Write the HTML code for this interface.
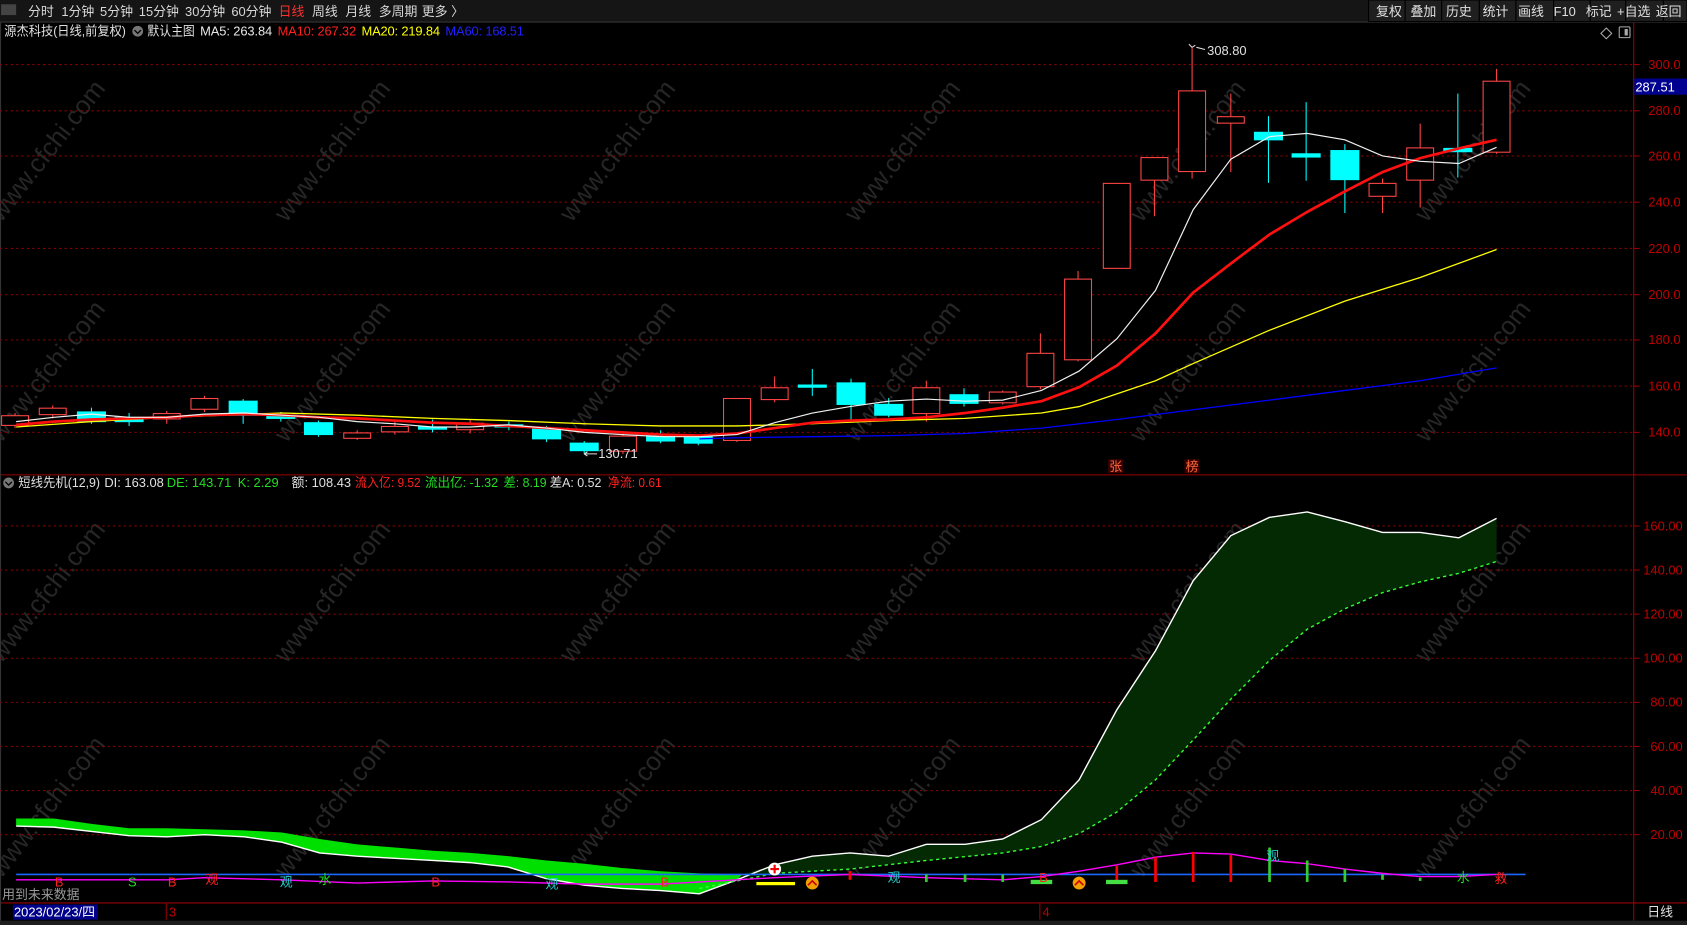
<!DOCTYPE html>
<html><head><meta charset="utf-8"><style>
html,body{margin:0;padding:0;background:#000;width:1687px;height:925px;overflow:hidden}
svg{display:block}
text{font-family:"Liberation Sans","Noto Sans CJK SC",sans-serif;font-size:12px}
</style></head><body>
<svg width="1687" height="925" viewBox="0 0 1568 860" preserveAspectRatio="none">
<rect width="1568" height="860" fill="#000"/>
<!-- watermarks -->
<g fill="#262626" font-family="Liberation Sans,sans-serif">
<text transform="translate(50,145) rotate(-52)" text-anchor="middle" style="font-size:24px">www.cfchi.com</text>
<text transform="translate(315,145) rotate(-52)" text-anchor="middle" style="font-size:24px">www.cfchi.com</text>
<text transform="translate(580,145) rotate(-52)" text-anchor="middle" style="font-size:24px">www.cfchi.com</text>
<text transform="translate(845,145) rotate(-52)" text-anchor="middle" style="font-size:24px">www.cfchi.com</text>
<text transform="translate(1110,145) rotate(-52)" text-anchor="middle" style="font-size:24px">www.cfchi.com</text>
<text transform="translate(1375,145) rotate(-52)" text-anchor="middle" style="font-size:24px">www.cfchi.com</text>
<text transform="translate(50,350) rotate(-52)" text-anchor="middle" style="font-size:24px">www.cfchi.com</text>
<text transform="translate(315,350) rotate(-52)" text-anchor="middle" style="font-size:24px">www.cfchi.com</text>
<text transform="translate(580,350) rotate(-52)" text-anchor="middle" style="font-size:24px">www.cfchi.com</text>
<text transform="translate(845,350) rotate(-52)" text-anchor="middle" style="font-size:24px">www.cfchi.com</text>
<text transform="translate(1110,350) rotate(-52)" text-anchor="middle" style="font-size:24px">www.cfchi.com</text>
<text transform="translate(1375,350) rotate(-52)" text-anchor="middle" style="font-size:24px">www.cfchi.com</text>
<text transform="translate(50,555) rotate(-52)" text-anchor="middle" style="font-size:24px">www.cfchi.com</text>
<text transform="translate(315,555) rotate(-52)" text-anchor="middle" style="font-size:24px">www.cfchi.com</text>
<text transform="translate(580,555) rotate(-52)" text-anchor="middle" style="font-size:24px">www.cfchi.com</text>
<text transform="translate(845,555) rotate(-52)" text-anchor="middle" style="font-size:24px">www.cfchi.com</text>
<text transform="translate(1110,555) rotate(-52)" text-anchor="middle" style="font-size:24px">www.cfchi.com</text>
<text transform="translate(1375,555) rotate(-52)" text-anchor="middle" style="font-size:24px">www.cfchi.com</text>
<text transform="translate(50,755) rotate(-52)" text-anchor="middle" style="font-size:24px">www.cfchi.com</text>
<text transform="translate(315,755) rotate(-52)" text-anchor="middle" style="font-size:24px">www.cfchi.com</text>
<text transform="translate(580,755) rotate(-52)" text-anchor="middle" style="font-size:24px">www.cfchi.com</text>
<text transform="translate(845,755) rotate(-52)" text-anchor="middle" style="font-size:24px">www.cfchi.com</text>
<text transform="translate(1110,755) rotate(-52)" text-anchor="middle" style="font-size:24px">www.cfchi.com</text>
<text transform="translate(1375,755) rotate(-52)" text-anchor="middle" style="font-size:24px">www.cfchi.com</text>
</g>

<!-- toolbar -->
<rect x="0" y="0" width="1568" height="20" fill="#151515"/>
<line x1="0" y1="20.5" x2="1568" y2="20.5" stroke="#333"/>
<rect x="1" y="4" width="14" height="10" fill="#444"/>
<g fill="#d8d8d8">
<text x="26" y="15">分时</text><text x="57" y="15">1分钟</text><text x="93" y="15">5分钟</text>
<text x="129" y="15">15分钟</text><text x="172" y="15">30分钟</text><text x="215" y="15">60分钟</text>
<text x="259" y="15" fill="#ff3030">日线</text><text x="290" y="15">周线</text><text x="321" y="15">月线</text>
<text x="352" y="15">多周期</text><text x="392" y="15">更多 〉</text>
</g>
<g fill="#1f1f1f" stroke="#000">
<rect x="1272" y="0" width="34" height="20"/><rect x="1306" y="0" width="34" height="20"/>
<rect x="1340" y="0" width="35" height="20"/><rect x="1375" y="0" width="34" height="20"/>
<rect x="1409" y="0" width="35" height="20"/><rect x="1444" y="0" width="34" height="20"/>
<rect x="1478" y="0" width="33" height="20"/><rect x="1511" y="0" width="35" height="20"/>
<rect x="1546" y="0" width="22" height="20"/>
</g>
<g fill="#e0e0e0">
<text x="1279" y="15">复权</text><text x="1311" y="15">叠加</text><text x="1344" y="15">历史</text>
<text x="1378" y="15">统计</text><text x="1411" y="15">画线</text><text x="1444" y="15">F10</text>
<text x="1474" y="15">标记</text><text x="1503" y="15">+自选</text><text x="1539" y="15">返回</text>
</g>
<!-- info line -->
<g>
<text x="4" y="33" fill="#e0e0e0" textLength="113" lengthAdjust="spacingAndGlyphs">源杰科技(日线,前复权)</text>
<circle cx="128" cy="29" r="5" fill="#777"/><path d="M125 28 l3 3 l3 -3" stroke="#000" fill="none" stroke-width="1.2"/>
<text x="137" y="33" fill="#e0e0e0" textLength="44" lengthAdjust="spacingAndGlyphs">默认主图</text>
<text x="186" y="33" fill="#e8e8e8" textLength="67">MA5: 263.84</text>
<text x="258" y="33" fill="#ff2020" textLength="73">MA10: 267.32</text>
<text x="336" y="33" fill="#ffff00" textLength="73">MA20: 219.84</text>
<text x="414" y="33" fill="#2020ff" textLength="73">MA60: 168.51</text>
</g>
<path d="M1493 26 l5 5 l-5 5 l-5 -5 z" fill="none" stroke="#aaa"/>
<rect x="1505" y="25" width="10" height="10" rx="1" fill="none" stroke="#aaa"/><rect x="1510" y="27" width="3" height="6" fill="#aaa"/>

<!-- axes -->
<line x1="1518.5" y1="21" x2="1518.5" y2="856" stroke="#9a0000"/>
<line x1="0" y1="441.5" x2="1568" y2="441.5" stroke="#9a0000"/>
<line x1="0" y1="839.5" x2="1568" y2="839.5" stroke="#9a0000"/>
<line x1="0.5" y1="21" x2="0.5" y2="856" stroke="#333"/>
<g stroke="#8a0000" stroke-dasharray="2,3">
<line x1="0" y1="60" x2="1518" y2="60"/><line x1="0" y1="103" x2="1518" y2="103"/>
<line x1="0" y1="145" x2="1518" y2="145"/><line x1="0" y1="188" x2="1518" y2="188"/>
<line x1="0" y1="231" x2="1518" y2="231"/><line x1="0" y1="274" x2="1518" y2="274"/>
<line x1="0" y1="316" x2="1518" y2="316"/><line x1="0" y1="359" x2="1518" y2="359"/>
<line x1="0" y1="402" x2="1518" y2="402"/>
<line x1="0" y1="489" x2="1518" y2="489"/><line x1="0" y1="530" x2="1518" y2="530"/>
<line x1="0" y1="571" x2="1518" y2="571"/><line x1="0" y1="612" x2="1518" y2="612"/>
<line x1="0" y1="653" x2="1518" y2="653"/><line x1="0" y1="694" x2="1518" y2="694"/>
<line x1="0" y1="735" x2="1518" y2="735"/><line x1="0" y1="776" x2="1518" y2="776"/>
</g>
<g stroke="#9a0000">
<line x1="1518" y1="60" x2="1524" y2="60"/><line x1="1518" y1="103" x2="1524" y2="103"/><line x1="1518" y1="145" x2="1524" y2="145"/><line x1="1518" y1="188" x2="1524" y2="188"/><line x1="1518" y1="231" x2="1524" y2="231"/><line x1="1518" y1="274" x2="1524" y2="274"/><line x1="1518" y1="316" x2="1524" y2="316"/><line x1="1518" y1="359" x2="1524" y2="359"/><line x1="1518" y1="402" x2="1524" y2="402"/>
<line x1="1518" y1="489" x2="1524" y2="489"/><line x1="1518" y1="530" x2="1524" y2="530"/><line x1="1518" y1="571" x2="1524" y2="571"/><line x1="1518" y1="612" x2="1524" y2="612"/><line x1="1518" y1="653" x2="1524" y2="653"/><line x1="1518" y1="694" x2="1524" y2="694"/><line x1="1518" y1="735" x2="1524" y2="735"/><line x1="1518" y1="776" x2="1524" y2="776"/>
</g>
<g fill="#c00000" text-anchor="end">
<text x="1562" y="64">300.0</text><text x="1562" y="107">280.0</text><text x="1562" y="149">260.0</text>
<text x="1562" y="192">240.0</text><text x="1562" y="235">220.0</text><text x="1562" y="278">200.0</text>
<text x="1562" y="320">180.0</text><text x="1562" y="363">160.0</text><text x="1562" y="406">140.0</text>
<text x="1564" y="493">160.00</text><text x="1564" y="534">140.00</text><text x="1564" y="575">120.00</text>
<text x="1564" y="616">100.00</text><text x="1564" y="657">80.00</text><text x="1564" y="698">60.00</text>
<text x="1564" y="739">40.00</text><text x="1564" y="780">20.00</text>
</g>
<rect x="1519" y="73" width="49" height="15" fill="#000090"/>
<text x="1520" y="85" fill="#fff">287.51</text>

<!-- candles -->
<g stroke="#ff4545" fill="#000" stroke-width="1">
<line x1="14" y1="384" x2="14" y2="398"/><rect x="1.5" y="386.5" width="25" height="9"/>
<line x1="49" y1="377" x2="49" y2="389"/><rect x="36.5" y="379.5" width="25" height="6"/>
<line x1="155" y1="382" x2="155" y2="394"/><rect x="142.5" y="384.5" width="25" height="5"/>
<line x1="190" y1="368" x2="190" y2="383"/><rect x="177.5" y="370.5" width="25" height="10"/>
<line x1="332" y1="400" x2="332" y2="409"/><rect x="319.5" y="402.5" width="25" height="5"/>
<line x1="367" y1="392" x2="367" y2="404"/><rect x="354.5" y="396.5" width="25" height="5"/>
<line x1="437" y1="390" x2="437" y2="403"/><rect x="424.5" y="393.5" width="25" height="6"/>
<line x1="579" y1="403" x2="579" y2="422"/><rect x="566.5" y="405.5" width="25" height="14"/>
<line x1="685" y1="370" x2="685" y2="411"/><rect x="672.5" y="370.5" width="25" height="39"/>
<line x1="720" y1="350" x2="720" y2="374"/><rect x="707.5" y="360.5" width="25" height="11"/>
<line x1="861" y1="354" x2="861" y2="392"/><rect x="848.5" y="360.5" width="25" height="24"/>
<line x1="932" y1="363" x2="932" y2="376"/><rect x="919.5" y="364.5" width="25" height="10"/>
<line x1="967" y1="310" x2="967" y2="362"/><rect x="954.5" y="328.5" width="25" height="31"/>
<line x1="1002" y1="252" x2="1002" y2="336"/><rect x="989.5" y="259.5" width="25" height="75"/>
<rect x="1025.5" y="170.5" width="25" height="79"/>
<line x1="1073" y1="146" x2="1073" y2="201"/><rect x="1060.5" y="146.5" width="25" height="21"/>
<line x1="1108" y1="44" x2="1108" y2="166"/><rect x="1095.5" y="84.5" width="25" height="75"/>
<line x1="1144" y1="87" x2="1144" y2="160"/><rect x="1131.5" y="108.5" width="25" height="6"/>
<line x1="1285" y1="166" x2="1285" y2="198"/><rect x="1272.5" y="170.5" width="25" height="12"/>
<line x1="1320" y1="115" x2="1320" y2="193"/><rect x="1307.5" y="137.5" width="25" height="30"/>
<line x1="1391" y1="64" x2="1391" y2="143"/><rect x="1378.5" y="75.5" width="25" height="66"/>
</g>
<g stroke="#00ffff" fill="#00ffff">
<line x1="85" y1="379" x2="85" y2="394"/><rect x="72" y="383" width="26" height="9"/>
<line x1="120" y1="384" x2="120" y2="396"/><rect x="107" y="388" width="26" height="4"/>
<line x1="226" y1="371" x2="226" y2="394"/><rect x="213" y="373" width="26" height="13"/>
<line x1="261" y1="383" x2="261" y2="392"/><rect x="248" y="386" width="26" height="3"/>
<line x1="296" y1="391" x2="296" y2="406"/><rect x="283" y="393" width="26" height="11"/>
<line x1="402" y1="390" x2="402" y2="402"/><rect x="389" y="397" width="26" height="2"/>
<line x1="473" y1="392" x2="473" y2="400"/><rect x="460" y="395" width="26" height="2"/>
<line x1="508" y1="396" x2="508" y2="411"/><rect x="495" y="398" width="26" height="10"/>
<line x1="543" y1="410" x2="543" y2="422"/><rect x="530" y="412" width="26" height="7"/>
<line x1="614" y1="400" x2="614" y2="412"/><rect x="601" y="405" width="26" height="5"/>
<line x1="649" y1="404" x2="649" y2="414"/><rect x="636" y="406" width="26" height="6"/>
<line x1="755" y1="343" x2="755" y2="368"/><rect x="742" y="358" width="26" height="2"/>
<line x1="791" y1="352" x2="791" y2="392"/><rect x="778" y="356" width="26" height="20"/>
<line x1="826" y1="370" x2="826" y2="388"/><rect x="813" y="376" width="26" height="10"/>
<line x1="896" y1="361" x2="896" y2="378"/><rect x="883" y="367" width="26" height="8"/>
<line x1="1179" y1="108" x2="1179" y2="170"/><rect x="1166" y="123" width="26" height="7"/>
<line x1="1214" y1="95" x2="1214" y2="168"/><rect x="1201" y="143" width="26" height="3"/>
<line x1="1250" y1="134" x2="1250" y2="198"/><rect x="1237" y="140" width="26" height="27"/>
<line x1="1355" y1="87" x2="1355" y2="165"/><rect x="1342" y="138" width="26" height="3"/>
</g>
<!-- MAs -->
<polyline fill="none" stroke="#0000ff" stroke-width="1.2" points="650,408 685,407 755,406 826,405 897,403 968,398 1038,390 1109,381 1180,372 1250,363 1320,354 1391,342"/>
<polyline fill="none" stroke="#ffff00" stroke-width="1.2" points="15,397 85,392 155,388 262,384 332,386 402,389 472,391 543,394 614,396 685,396 755,394 826,391 897,389 968,384 1003,378 1074,354 1109,338 1180,307 1250,280 1320,258 1391,232"/>
<polyline fill="none" stroke="#ff1010" stroke-width="2.5" points="15,395 50,392 85,390 120,389 155,388 190,386 227,385 262,386 297,388 332,389 367,391 402,393 437,394 472,396 508,398 543,400 578,402 614,404 650,405 685,403 720,398 755,393 790,391 826,390 861,388 897,384 932,379 968,373 1003,360 1038,340 1074,310 1109,272 1144,245 1180,218 1215,197 1250,178 1285,160 1320,147 1356,138 1391,130"/>
<polyline fill="none" stroke="#f0f0f0" stroke-width="1.1" points="15,392 50,388 85,385 120,388 155,388 190,385 227,384 262,386 297,388 332,392 367,394 402,397 437,397 472,395 508,398 543,402 578,404 614,406 650,406 685,404 720,393 755,384 790,378 826,373 861,371 897,373 932,372 968,363 1003,345 1038,315 1074,270 1109,195 1144,148 1180,127 1215,124 1250,130 1285,145 1320,150 1356,152 1391,137"/>
<path d="M1108 44 l-3 -3 m3 3 l3 -2 M1112 44 l8 2" stroke="#ddd" fill="none"/>
<text x="1122" y="51" fill="#e0e0e0">308.80</text>
<path d="M543 422 h12 M543 422 l3 -2 M543 422 l3 2" stroke="#ddd" fill="none"/>
<text x="556" y="426" fill="#e0e0e0">130.71</text>
<rect x="1030" y="427" width="14" height="13" fill="#3a0000"/><text x="1031" y="438" fill="#ff6a3a">张</text>
<rect x="1101" y="427" width="14" height="13" fill="#3a0000"/><text x="1102" y="438" fill="#ff6a3a">榜</text>

<!-- indicator header -->
<circle cx="8" cy="449" r="5" fill="#777"/><path d="M5 448 l3 3 l3 -3" stroke="#000" fill="none" stroke-width="1.2"/>
<text x="17" y="453" fill="#e0e0e0" textLength="76" lengthAdjust="spacingAndGlyphs">短线先机(12,9)</text>
<text x="97" y="453" fill="#e0e0e0">DI: 163.08</text>
<text x="155" y="453" fill="#22dd22">DE: 143.71</text>
<text x="221" y="453" fill="#22dd22">K: 2.29</text>
<text x="271" y="453" fill="#e0e0e0">额: 108.43</text>
<text x="330" y="453" fill="#ff2020" textLength="61" lengthAdjust="spacingAndGlyphs">流入亿: 9.52</text>
<text x="395" y="453" fill="#22dd22" textLength="68" lengthAdjust="spacingAndGlyphs">流出亿: -1.32</text>
<text x="468" y="453" fill="#22dd22" textLength="40" lengthAdjust="spacingAndGlyphs">差: 8.19</text>
<text x="511" y="453" fill="#e0e0e0" textLength="48" lengthAdjust="spacingAndGlyphs">差A: 0.52</text>
<text x="565" y="453" fill="#ff2020" textLength="50" lengthAdjust="spacingAndGlyphs">净流: 0.61</text>

<!-- indicator bands -->
<polygon fill="#00e000" points="15,761 50,761 85,766 120,770 155,770 190,771 227,772 262,774 297,780 332,785 367,788 402,791 437,793 472,796 508,800 543,803 578,807 614,810 650,812 690,813 685,818 650,831 614,828 578,826 543,823 508,817 472,806 437,802 402,800 367,798 332,796 297,793 262,783 227,778 190,776 155,778 120,777 85,773 50,769 15,768"/>
<polygon fill="#042a04" points="690,813 720,804 755,796 790,793 826,796 861,785 897,785 932,780 968,762 1003,725 1038,660 1074,605 1109,540 1144,498 1180,481 1215,476 1250,485 1285,495 1320,495 1356,500 1391,482 1391,522 1356,533 1320,541 1285,551 1250,566 1215,585 1180,614 1144,650 1109,688 1074,725 1038,755 1003,775 968,787 932,793 861,800 790,808 720,812 690,816"/>
<polyline fill="none" stroke="#fff" stroke-width="1.3" points="15,768 50,769 85,773 120,777 155,778 190,776 227,778 262,783 297,793 332,796 367,798 402,800 437,802 472,806 508,817 543,823 578,826 614,828 650,831 685,818 720,804 755,796 790,793 826,796 861,785 897,785 932,780 968,762 1003,725 1038,660 1074,605 1109,540 1144,498 1180,481 1215,476 1250,485 1285,495 1320,495 1356,500 1391,482"/>
<polyline fill="none" stroke="#33ff33" stroke-width="1.3" stroke-dasharray="3,3" points="650,826 720,812 790,808 861,800 932,793 968,787 1003,775 1038,755 1074,725 1109,688 1144,650 1180,614 1215,585 1250,566 1285,551 1320,541 1356,533 1391,522"/>
<line x1="15" y1="813" x2="1418" y2="813" stroke="#1a66ff" stroke-width="1.5"/>
<polyline fill="none" stroke="#ff00ff" stroke-width="1.3" points="15,818 85,818 155,818 190,816 262,818 332,821 402,819 472,820 543,822 614,822 650,820 720,816 790,813 861,816 932,818 968,815 1003,810 1038,804 1074,797 1109,793 1144,794 1180,800 1215,803 1250,808 1285,812 1320,815 1356,815 1391,813"/>
<g stroke="#ff0000" stroke-width="2.5">
<line x1="790" y1="810" x2="790" y2="818"/><line x1="1038" y1="805" x2="1038" y2="820"/>
<line x1="1074" y1="797" x2="1074" y2="820"/><line x1="1109" y1="792" x2="1109" y2="820"/><line x1="1144" y1="795" x2="1144" y2="820"/>
</g>
<g stroke="#33cc33" stroke-width="2.5">
<line x1="861" y1="813" x2="861" y2="820"/><line x1="897" y1="813" x2="897" y2="820"/><line x1="932" y1="813" x2="932" y2="820"/>
<line x1="1180" y1="788" x2="1180" y2="820"/><line x1="1215" y1="800" x2="1215" y2="820"/><line x1="1250" y1="808" x2="1250" y2="820"/><line x1="1285" y1="813" x2="1285" y2="818"/><line x1="1320" y1="816" x2="1320" y2="819"/>
</g>
<rect x="703" y="820" width="36" height="3" fill="#ffff00"/>
<rect x="958" y="818" width="20" height="4" fill="#44dd44"/><rect x="1028" y="818" width="20" height="4" fill="#44dd44"/>
<circle cx="720" cy="808" r="6" fill="#fff"/><path d="M716 808 h8 M720 804 v8" stroke="#e00" stroke-width="2"/>
<circle cx="755" cy="821" r="6" fill="#f0a000"/><path d="M751 823 l4 -4 l4 4" stroke="#c00" fill="none" stroke-width="1.5"/>
<circle cx="1003" cy="821" r="6" fill="#f0a000"/><path d="M999 823 l4 -4 l4 4" stroke="#c00" fill="none" stroke-width="1.5"/>
<g font-size="11">
<text x="51" y="824" fill="#ff2020">B</text><text x="119" y="824" fill="#22dd22">S</text>
<text x="156" y="824" fill="#ff2020">B</text><text x="191" y="822" fill="#ff2020">观</text>
<text x="260" y="824" fill="#22cccc">观</text><text x="296" y="822" fill="#22dd22">水</text>
<text x="401" y="824" fill="#ff2020">B</text><text x="507" y="826" fill="#22cccc">观</text>
<text x="614" y="824" fill="#ff2020">B</text><text x="825" y="820" fill="#22cccc">观</text>
<text x="966" y="820" fill="#ff2020">B</text><text x="1177" y="800" fill="#22cccc">观</text>
<text x="1354" y="820" fill="#22dd22">水</text><text x="1389" y="821" fill="#ff2020">救</text>
</g>
<text x="2" y="836" fill="#9a9a9a">用到未来数据</text>

<!-- date bar -->
<rect x="12" y="841" width="79" height="14" fill="#00008a"/>
<text x="13" y="852" fill="#fff">2023/02/23/四</text>
<line x1="154.5" y1="840" x2="154.5" y2="855" stroke="#9a0000"/><text x="157" y="852" fill="#c00000">3</text>
<line x1="966.5" y1="840" x2="966.5" y2="855" stroke="#9a0000"/><text x="969" y="852" fill="#c00000">4</text>
<text x="1531" y="852" fill="#e0e0e0">日线</text>
<rect x="0" y="856" width="1568" height="4" fill="#1e1e1e"/>
</svg>
</body></html>
